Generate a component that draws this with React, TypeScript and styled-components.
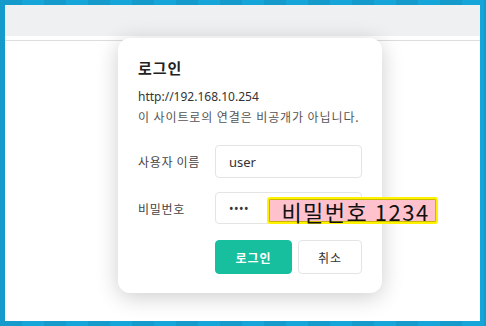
import styled, { createGlobalStyle } from 'styled-components';

const GlobalStyle = createGlobalStyle`
  html, body {
    margin: 0;
    padding: 0;
  }
  body {
    font-family: 'Noto Sans', 'Noto Sans CJK KR', sans-serif;
    background: #16a5d8;
  }
`;

export default function App() {
  return (
    <>
      <GlobalStyle />
      <StyledFrame>
        <StyledWindow>
          <StyledTopBar />
          <StyledDivider />
          <StyledDialog>
            <StyledTitle>로그인</StyledTitle>
            <StyledHost>http://192.168.10.254</StyledHost>
            <StyledNotice>이 사이트로의 연결은 비공개가 아닙니다.</StyledNotice>
            <StyledForm>
              <StyledLabel>사용자 이름</StyledLabel>
              <StyledInput $height={33}>user</StyledInput>
              <StyledLabel>비밀번호</StyledLabel>
              <StyledInput $height={32}>
                <StyledDots>••••</StyledDots>
                <StyledNote>비밀번호 1234</StyledNote>
              </StyledInput>
              <span />
              <StyledActions>
                <StyledButton $primary>로그인</StyledButton>
                <StyledButton>취소</StyledButton>
              </StyledActions>
            </StyledForm>
          </StyledDialog>
        </StyledWindow>
      </StyledFrame>
    </>
  );
}

const StyledFrame = styled.div`
  width: 486px;
  height: 326px;
  box-sizing: border-box;
  padding: 5px 6px 5px 5px;
  background:
    repeating-linear-gradient(90deg, rgba(0, 0, 0, 0.06) 0 22px, transparent 22px 44px),
    #16a5d8;
`;

const StyledWindow = styled.div`
  position: relative;
  height: 100%;
  background: #ffffff;
  overflow: hidden;
`;

const StyledTopBar = styled.div`
  height: 31px;
  background: #eff0f2;
`;

const StyledDivider = styled.div`
  margin-top: 4px;
  height: 1px;
  background: #dcdddf;
`;

const StyledDialog = styled.div`
  position: absolute;
  left: 113px;
  top: 33px;
  width: 264px;
  height: 255px;
  box-sizing: border-box;
  padding: 20px 20px 19px 20px;
  background: #ffffff;
  border-radius: 12px;
  box-shadow: 0 4px 22px rgba(0, 0, 0, 0.2);
`;

const StyledTitle = styled.div`
  font-family: 'Noto Sans CJK KR', sans-serif;
  font-size: 15px;
  font-weight: 700;
  line-height: 20px;
  letter-spacing: 1px;
  color: #222222;
  margin-bottom: 10px;
`;

const StyledHost = styled.div`
  font-size: 12px;
  line-height: 18px;
  color: #333333;
`;

const StyledNotice = styled.div`
  font-family: 'Noto Sans CJK KR', sans-serif;
  font-size: 12px;
  line-height: 18px;
  letter-spacing: 0.9px;
  color: #555555;
  margin-top: 2px;
  white-space: nowrap;
`;

const StyledForm = styled.div`
  display: grid;
  grid-template-columns: 77px 147px;
  row-gap: 14px;
  align-items: center;
  margin-top: 19px;
`;

const StyledLabel = styled.div`
  font-family: 'Noto Sans CJK KR', sans-serif;
  font-size: 12px;
  letter-spacing: 0.7px;
  color: #444444;
`;

const StyledInput = styled.div<{ $height: number }>`
  position: relative;
  height: ${(p) => p.$height}px;
  box-sizing: border-box;
  border: 1px solid #e4e4e4;
  border-radius: 4px;
  padding: 0 13px;
  display: flex;
  align-items: center;
  font-size: 13px;
  color: #333333;
`;

const StyledDots = styled.span`
  font-size: 12px;
  letter-spacing: 0.5px;
  color: #333333;
`;

const StyledNote = styled.div`
  position: absolute;
  left: 51px;
  top: 4px;
  width: 171px;
  height: 27px;
  box-sizing: border-box;
  padding-left: 6px;
  border: 2px solid #fff200;
  box-shadow: inset 0 0 0 1px #c9b800;
  border-radius: 3px;
  background: #ffc2cc;
  display: flex;
  align-items: center;
  justify-content: center;
  font-family: 'Noto Sans CJK KR', sans-serif;
  font-size: 22px;
  line-height: 1;
  color: #111111;
  letter-spacing: 1.5px;
  white-space: nowrap;
`;

const StyledActions = styled.div`
  display: flex;
  gap: 6px;
  margin-top: 2px;
`;

const StyledButton = styled.div<{ $primary?: boolean }>`
  height: 34px;
  width: ${(p) => (p.$primary ? '77px' : '64px')};
  box-sizing: border-box;
  border-radius: 4px;
  border: 1px solid ${(p) => (p.$primary ? '#17bf9e' : '#e4e4e4')};
  background: ${(p) => (p.$primary ? '#17bf9e' : '#ffffff')};
  color: ${(p) => (p.$primary ? '#ffffff' : '#333333')};
  font-family: 'Noto Sans CJK KR', sans-serif;
  font-size: 12px;
  font-weight: ${(p) => (p.$primary ? 700 : 400)};
  letter-spacing: 1px;
  display: flex;
  align-items: center;
  justify-content: center;
`;
